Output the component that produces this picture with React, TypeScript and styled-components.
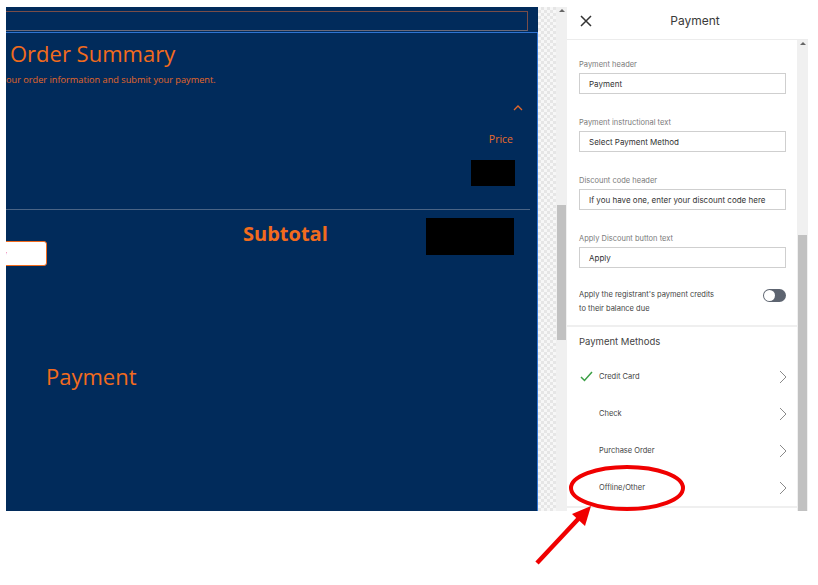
import styled, { createGlobalStyle } from "styled-components";

const ORANGE = "#f26b1d";
const NAVY = "#012b5b";

const GlobalStyle = createGlobalStyle`
  html, body {
    margin: 0;
    padding: 0;
    background: #ffffff;
  }
  body {
    width: 818px;
    height: 585px;
    overflow: hidden;
  }
`;

const Page = styled.div`
  position: relative;
  width: 818px;
  height: 585px;
  padding: 7px 0 0 6px;
  box-sizing: border-box;
`;

const Shot = styled.div`
  display: flex;
  width: 802px;
  height: 504px;
`;

const LeftPane = styled.div`
  width: 532px;
  background: ${NAVY};
  display: flex;
  flex-direction: column;
  overflow: hidden;
  font-family: "Open Sans", "Noto Sans", sans-serif;
  color: ${ORANGE};
`;

const TopStrip = styled.div`
  height: 25px;
  padding-top: 4px;
  box-sizing: border-box;
`;

const OrangeBox = styled.div`
  height: 20px;
  width: 532px;
  margin-left: -10px;
  box-sizing: border-box;
  border: 1px solid #7a4d48;
  border-bottom-color: #6c6a78;
`;

const Section = styled.div`
  flex: 1;
  display: flex;
  flex-direction: column;
  border-top: 1px solid #2f73d0;
  border-right: 1px solid #2f73d0;
`;

const Title = styled.h1`
  margin: 6px 0 0 4px;
  font-size: 22px;
  line-height: 28px;
  font-weight: 400;
`;

const Subtitle = styled.p`
  margin: 6px 0 0 0;
  font-size: 9.2px;
  line-height: 14px;
  color: #e4672a;
`;

const Chevron = styled.svg`
  align-self: flex-end;
  margin: 17px 14px 0 0;
`;

const Price = styled.div`
  align-self: flex-end;
  margin: 20px 24px 0 0;
  font-size: 10.5px;
  line-height: 14px;
  color: #e86c2c;
`;

const Redacted = styled.div<{ $w: number; $h: number }>`
  width: ${(p) => p.$w}px;
  height: ${(p) => p.$h}px;
  background: #000;
`;

const PriceBox = styled(Redacted)`
  align-self: flex-end;
  margin: 14px 22px 0 0;
`;

const Divider = styled.div`
  margin-top: 23px;
  width: 524px;
  height: 1px;
  background: #4a6485;
`;

const TotalsGrid = styled.div`
  display: grid;
  grid-template-columns: 237px 183px 88px;
  align-items: start;
`;

const ApplyButton = styled.button`
  margin: 31px 0 0 -40px;
  width: 81px;
  height: 25px;
  padding: 0 0 0 11px;
  text-align: left;
  background: #fff;
  border: 1px solid ${ORANGE};
  border-radius: 3px;
  color: ${ORANGE};
  font-family: inherit;
  font-size: 11px;
`;

const Subtotal = styled.div`
  margin-top: 12px;
  font-size: 20px;
  line-height: 24px;
  font-weight: 700;
`;

const TotalBox = styled(Redacted)`
  margin-top: 8px;
`;

const PaymentHeading = styled.h2`
  margin: 97px 0 0 40px;
  font-size: 22px;
  line-height: 26px;
  font-weight: 400;
`;

const Checker = styled.div`
  width: 18px;
  background-color: #f7f7f7;
  background-image: conic-gradient(#e6e6e6 25%, transparent 0 50%, #e6e6e6 0 75%, transparent 0);
  background-size: 6px 6px;
`;

const ScrollTrack = styled.div`
  width: 11px;
  background: #f0f0f0;
  display: flex;
  flex-direction: column;
  align-items: center;
`;

const ScrollArrow = styled.div`
  margin-top: 2px;
  width: 0;
  height: 0;
  border-left: 3px solid transparent;
  border-right: 3px solid transparent;
  border-bottom: 3px solid #666;
`;

const ScrollThumb = styled.div<{ $top: number; $h: number }>`
  margin-top: ${(p) => p.$top}px;
  width: 9px;
  height: ${(p) => p.$h}px;
  background: #c1c1c1;
`;

const Sidebar = styled.div`
  width: 241px;
  background: #fff;
  display: flex;
  flex-direction: column;
  font-family: Inter, "Noto Sans", sans-serif;
  color: #333;
`;

const SideHeader = styled.div`
  height: 33px;
  flex-shrink: 0;
  display: flex;
  align-items: center;
  padding: 0 10px 5px 13px;
  border-bottom: 1px solid #ececec;
  box-sizing: border-box;
`;

const HeaderTitle = styled.div`
  flex: 1;
  text-align: center;
  font-size: 12px;
  color: #3a3a3a;
`;

const SideBody = styled.div`
  flex: 1;
  display: flex;
  overflow: hidden;
`;

const SideContent = styled.div`
  flex: 1;
  display: flex;
  flex-direction: column;
`;

const Fields = styled.div`
  display: flex;
  flex-direction: column;
  gap: 23px;
  padding: 19px 11px 0 12px;
`;

const Field = styled.label`
  display: flex;
  flex-direction: column;
  gap: 3px;
`;

const FieldLabel = styled.span`
  font-size: 7.5px;
  line-height: 11px;
  color: #7a7a7a;
`;

const FieldInput = styled.div`
  height: 21px;
  box-sizing: border-box;
  border: 1px solid #cfcfcf;
  padding-left: 9px;
  display: flex;
  align-items: center;
  font-size: 8px;
  color: #333;
`;

const ToggleRow = styled.div`
  display: flex;
  justify-content: space-between;
  align-items: flex-start;
  margin-top: -3px;
  padding-bottom: 9px;
`;

const ToggleText = styled.div`
  font-size: 7.5px;
  line-height: 14px;
  color: #444;
`;

const Toggle = styled.div`
  width: 23px;
  height: 13px;
  margin-top: 1px;
  border-radius: 7px;
  background: #5d6470;
  display: flex;
  align-items: center;
  padding-left: 1px;
  box-sizing: border-box;
`;

const Knob = styled.div`
  width: 11px;
  height: 11px;
  border-radius: 50%;
  background: #fff;
`;

const SectionRule = styled.div`
  height: 2px;
  background: #efefef;
`;

const MethodsTitle = styled.div`
  padding: 8px 0 0 12px;
  font-size: 9.5px;
  line-height: 14px;
  color: #444;
`;

const MethodList = styled.div`
  margin-top: 9px;
  display: flex;
  flex-direction: column;
`;

const MethodRow = styled.div`
  height: 37px;
  display: flex;
  align-items: center;
  padding: 0 10px 0 13px;
`;

const CheckSlot = styled.div`
  width: 19px;
  display: flex;
  align-items: center;
`;

const MethodName = styled.span`
  flex: 1;
  font-size: 7.5px;
  color: #444;
`;

const Overlay = styled.svg`
  position: absolute;
  left: 0;
  top: 0;
  pointer-events: none;
`;

const CloseIcon = () => (
  <svg width="12" height="12" viewBox="0 0 12 12">
    <path d="M1 1L11 11M11 1L1 11" stroke="#333" strokeWidth="1.5" fill="none" />
  </svg>
);

const CheckIcon = () => (
  <svg width="13" height="11" viewBox="0 0 13 11">
    <path d="M1 6L4.5 9.5L12 1" stroke="#3a9f45" strokeWidth="1.5" fill="none" />
  </svg>
);

const ChevronRight = () => (
  <svg width="8" height="14" viewBox="0 0 8 14">
    <path d="M1 1L7 7L1 13" stroke="#8a8a8a" strokeWidth="1" fill="none" />
  </svg>
);

const fields = [
  { label: "Payment header", value: "Payment" },
  { label: "Payment instructional text", value: "Select Payment Method" },
  { label: "Discount code header", value: "If you have one, enter your discount code here" },
  { label: "Apply Discount button text", value: "Apply" },
];

const methods = [
  { name: "Credit Card", enabled: true },
  { name: "Check", enabled: false },
  { name: "Purchase Order", enabled: false },
  { name: "Offline/Other", enabled: false },
];

export default function App() {
  return (
    <Page>
      <GlobalStyle />
      <Shot>
        <LeftPane>
          <TopStrip>
            <OrangeBox />
          </TopStrip>
          <Section>
            <Title>Order Summary</Title>
            <Subtitle>our order information and submit your payment.</Subtitle>
            <Chevron width="10" height="8" viewBox="0 0 10 8">
              <path d="M1 6L5 2L9 6" stroke="#e4672a" strokeWidth="1.3" fill="none" />
            </Chevron>
            <Price>Price</Price>
            <PriceBox $w={44} $h={26} />
            <Divider />
            <TotalsGrid>
              <ApplyButton>Apply</ApplyButton>
              <Subtotal>Subtotal</Subtotal>
              <TotalBox $w={88} $h={37} />
            </TotalsGrid>
            <PaymentHeading>Payment</PaymentHeading>
          </Section>
        </LeftPane>
        <Checker />
        <ScrollTrack>
          <ScrollArrow />
          <ScrollThumb $top={193} $h={135} />
        </ScrollTrack>
        <Sidebar>
          <SideHeader>
            <CloseIcon />
            <HeaderTitle>Payment</HeaderTitle>
          </SideHeader>
          <SideBody>
            <SideContent>
              <Fields>
                {fields.map((f) => (
                  <Field key={f.label}>
                    <FieldLabel>{f.label}</FieldLabel>
                    <FieldInput>{f.value}</FieldInput>
                  </Field>
                ))}
                <ToggleRow>
                  <ToggleText>
                    Apply the registrant's payment credits
                    <br />
                    to their balance due
                  </ToggleText>
                  <Toggle>
                    <Knob />
                  </Toggle>
                </ToggleRow>
              </Fields>
              <SectionRule />
              <MethodsTitle>Payment Methods</MethodsTitle>
              <MethodList>
                {methods.map((m) => (
                  <MethodRow key={m.name}>
                    <CheckSlot>{m.enabled && <CheckIcon />}</CheckSlot>
                    <MethodName>{m.name}</MethodName>
                    <ChevronRight />
                  </MethodRow>
                ))}
              </MethodList>
              <SectionRule />
            </SideContent>
            <ScrollTrack>
              <ScrollArrow />
              <ScrollThumb $top={190} $h={300} />
            </ScrollTrack>
          </SideBody>
        </Sidebar>
      </Shot>
      <Overlay width="818" height="585" viewBox="0 0 818 585">
        <ellipse cx="627" cy="488" rx="56" ry="21" stroke="#f00000" strokeWidth="4" fill="none" />
        <path d="M537 563L581 516" stroke="#f00000" strokeWidth="4.5" fill="none" />
        <polygon points="591,506 572,514 585,526" fill="#f00000" />
      </Overlay>
    </Page>
  );
}
